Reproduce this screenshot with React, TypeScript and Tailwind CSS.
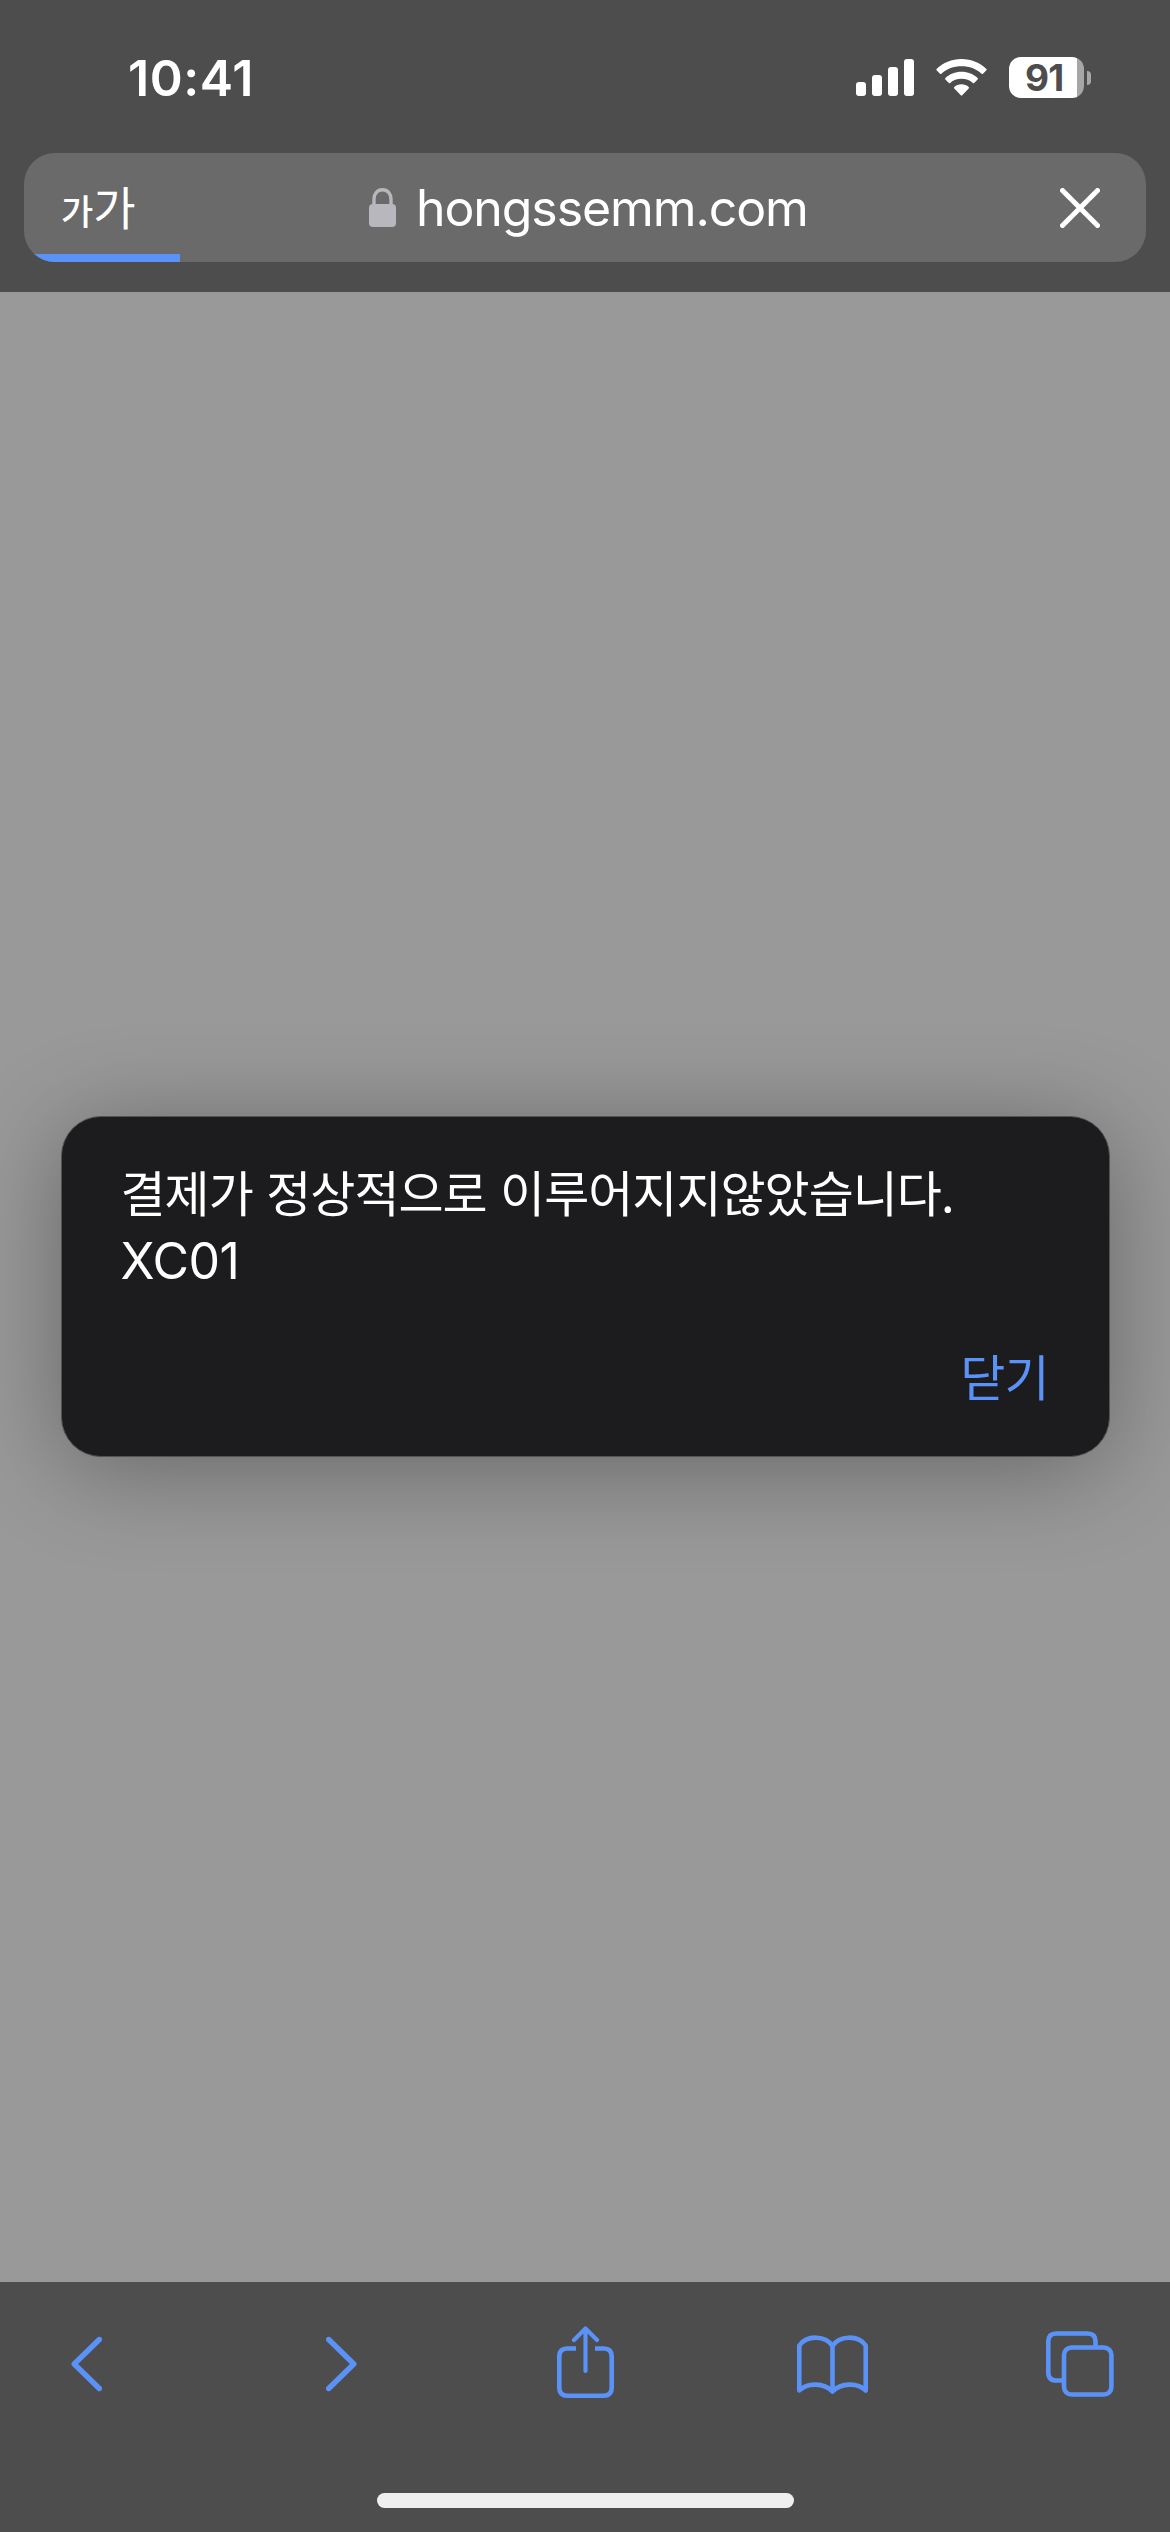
import type { ReactNode } from "react";

const latin = "font-[Inter,'Noto_Sans_CJK_KR',sans-serif]";

function SignalIcon() {
  return (
    <svg width="58" height="37" viewBox="0 0 58 37" fill="#fff">
      <rect x="0" y="23" width="10" height="14" rx="3" />
      <rect x="16" y="16" width="10" height="21" rx="3" />
      <rect x="32" y="8" width="10" height="29" rx="3" />
      <rect x="48" y="0" width="10" height="37" rx="3" />
    </svg>
  );
}

function WifiIcon() {
  return (
    <svg width="51" height="37" viewBox="0 0 51 37" fill="#fff">
      <path d="M25.5 0C35.3 0 44 3.800 50.400 9.900Q51 10.600 50.400 11.300L47 14.700Q46.300 15.300 45.600 14.700C40.400 9.800 33.300 7.300 25.500 7.300S10.600 9.800 5.400 14.700Q4.700 15.300 4 14.700L.6 11.300Q0 10.600.6 9.900C7 3.800 15.700 0 25.500 0Z" />
      <path d="M25.500 12.800C31.900 12.800 37.500 15.200 41.600 19Q42.300 19.700 41.600 20.400L38.100 23.900Q37.500 24.500 36.800 23.900C33.800 21.300 29.900 19.800 25.500 19.800S17.200 21.300 14.200 23.900Q13.500 24.500 12.900 23.900L9.400 20.400Q8.700 19.700 9.400 19C13.500 15.200 19.100 12.800 25.500 12.800Z" />
      <path d="M25.500 25.300C28.300 25.300 30.800 26.300 32.700 28Q33.400 28.700 32.700 29.400L26.200 36.300Q25.500 37 24.800 36.300L18.300 29.400Q17.600 28.700 18.300 28C20.200 26.300 22.700 25.300 25.500 25.300Z" />
    </svg>
  );
}

function Battery() {
  return (
    <div className="flex items-center gap-[3px]">
      <div className="flex h-[41px] w-[75px] rounded-[12px] bg-[linear-gradient(to_right,#fff_68px,#a6a6a6_68px)] pl-[16px]">
        <span className="text-[37px] leading-[41px] font-bold tracking-[-0.800px] text-[#4d4d4d]">91</span>
      </div>
      <div className="h-[14px] w-[4px] rounded-r-full bg-[#a6a6a6]" />
    </div>
  );
}

function LockIcon() {
  return (
    <svg width="27" height="39" viewBox="0 0 27 39">
      <path d="M5 18V11C5 5.500 8.500 1.700 13.500 1.700S22 5.500 22 11V18" fill="none" stroke="#b8b7bd" strokeWidth="3.400" />
      <rect x="0" y="16" width="27" height="23" rx="4" fill="#b8b7bd" />
    </svg>
  );
}

function ToolButton({ label, children }: { label: string; children: ReactNode }) {
  return (
    <button aria-label={label} className="block h-[72px] shrink-0">
      {children}
    </button>
  );
}

const line = {
  fill: "none",
  stroke: "#5b92f7",
  strokeWidth: 4.6,
  strokeLinecap: "round" as const,
  strokeLinejoin: "round" as const,
};

function StatusBar() {
  return (
    <div className="flex h-[153px] items-start justify-between pr-[79px] pl-[128px]">
      <span className="mt-[48px] text-[50px] leading-[60px] font-semibold tracking-[0.600px]">10:41</span>
      <div className="mt-[57px] flex h-[41px] items-center gap-[22px]">
        <SignalIcon />
        <WifiIcon />
        <Battery />
      </div>
    </div>
  );
}

function AddressBar() {
  return (
    <div className="mx-[24px] flex h-[109px] flex-col overflow-hidden rounded-[31px] bg-[#6a6a6a]">
      <div className="flex h-[101px] items-center pt-[8px] pr-[46px] pl-[37px]">
        <div className="mt-[-6px] flex w-[308px] items-baseline font-['Noto_Sans_CJK_KR',sans-serif] leading-none">
          <span className="text-[35px] font-medium">가</span>
          <span className="text-[46px]">가</span>
        </div>
        <LockIcon />
        <span className="ml-[20px] text-[50px] leading-[60px] tracking-[-1.100px]">hongssemm.com</span>
        <svg className="ml-auto" width="40" height="40" viewBox="0 0 40 40">
          <path d="M2.500 2.500L37.500 37.500M37.500 2.500L2.500 37.500" stroke="#fff" strokeWidth="5" strokeLinecap="round" />
        </svg>
      </div>
      <div className="h-[8px] w-[156px] bg-[#5b92f7]" />
    </div>
  );
}

function AlertDialog() {
  return (
    <div
      role="alertdialog"
      className="flex h-[341px] w-[1049px] flex-col rounded-[40px] border border-[#535353] bg-[#1c1c1e] px-[59px] pt-[40px] shadow-[0_12px_100px_rgba(0,0,0,0.33)]"
    >
      <p className="text-[50px] leading-[67px]">
        <span className="block font-['Noto_Sans_CJK_KR',sans-serif] text-[49px] tracking-[-1px] [word-spacing:3.500px] whitespace-nowrap">
          결제가 정상적으로 이루어지지않았습니다.
        </span>
        <span className="mt-[4px] block tracking-[-0.500px]">XC01</span>
      </p>
      <button className="mt-[46px] mr-[1px] self-end font-['Noto_Sans_CJK_KR',sans-serif] text-[49px] leading-[67px] tracking-[-1px] text-[#5b92f7]">
        닫기
      </button>
    </div>
  );
}

function Toolbar() {
  return (
    <footer className="flex h-[250px] flex-col items-center bg-[#4d4d4d]">
      <nav className="flex w-full pt-[44px] pl-[71px]">
        <ToolButton label="Back">
          <svg width="31" height="72" viewBox="0 0 31 72">
            <path d="M28.300 13.500L3.200 38L28.300 62.500" {...line} strokeWidth={5.4} />
          </svg>
        </ToolButton>
        <div className="w-[224px]" />
        <ToolButton label="Forward">
          <svg width="31" height="72" viewBox="0 0 31 72">
            <path d="M2.700 13.500L27.800 38L2.700 62.500" {...line} strokeWidth={5.4} />
          </svg>
        </ToolButton>
        <div className="w-[200px]" />
        <ToolButton label="Share">
          <svg width="57" height="72" viewBox="0 0 57 72">
            <path d="M19 22.500H10.300Q2.300 22.500 2.300 30.500V61.700Q2.300 69.700 10.300 69.700H46.700Q54.700 69.700 54.700 61.700V30.500Q54.700 22.500 46.700 22.500H38" {...line} strokeLinecap="butt" />
            <path d="M28.500 2.800V45M17 14L28.500 2.500L40 14" {...line} strokeWidth={4.2} />
          </svg>
        </ToolButton>
        <div className="w-[183px]" />
        <ToolButton label="Bookmarks">
          <svg width="71" height="72" viewBox="0 0 71 72">
            <path d="M35.500 20C29 9.500 10 8.500 2.300 19.500V64.500C10 56.500 27 56.500 35.500 65.500C44 56.500 61 56.500 68.700 64.500V19.500C61 8.500 42 9.500 35.500 20ZV65.500" {...line} />
          </svg>
        </ToolButton>
        <div className="w-[178px]" />
        <ToolButton label="Tabs">
          <svg width="68" height="72" viewBox="0 0 68 72">
            <path d="M17 54.500H10.300Q2.300 54.500 2.300 46.500V15.500Q2.300 7.500 10.300 7.500H41.500Q49.500 7.500 49.500 15.500V21" {...line} strokeLinecap="butt" />
            <rect x="18" y="21.500" width="47.400" height="47" rx="7.500" {...line} />
          </svg>
        </ToolButton>
      </nav>
      <div className="mt-[95px] h-[15px] w-[417px] rounded-full bg-[#efefef]" />
    </footer>
  );
}

export default function App() {
  return (
    <div className={`flex h-[2532px] w-[1170px] flex-col overflow-hidden bg-[#999999] text-white ${latin}`}>
      <header className="h-[292px] shrink-0 bg-[#4d4d4d]">
        <StatusBar />
        <AddressBar />
      </header>
      <main className="flex flex-1 flex-col items-center overflow-hidden pt-[824px]">
        <AlertDialog />
      </main>
      <Toolbar />
    </div>
  );
}
